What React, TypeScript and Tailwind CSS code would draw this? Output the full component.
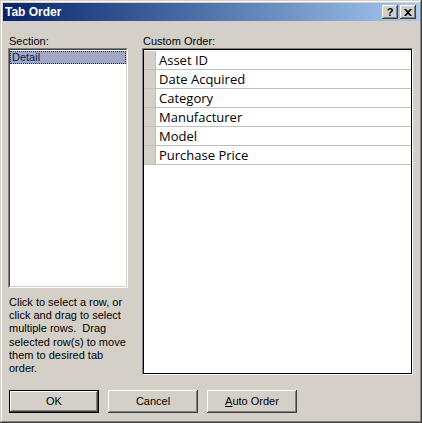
import React from 'react'

const FIELDS = ['Asset ID', 'Date Acquired', 'Category', 'Manufacturer', 'Model', 'Purchase Price']

const raised =
  'bg-[#d4d0c8] shadow-[inset_-1px_-1px_#404040,inset_1px_1px_#ffffff,inset_-2px_-2px_#808080,inset_2px_2px_#d4d0c8]'

function CaptionButton({ children }: { children: React.ReactNode }) {
  return (
    <div className={`w-[16px] h-[14px] flex items-center justify-center ${raised}`}>{children}</div>
  )
}

function DialogButton({ children, isDefault }: { children: React.ReactNode; isDefault?: boolean }) {
  return (
    <div className={`w-[90px] h-[23px] ${isDefault ? 'border border-black' : ''}`}>
      <div className={`w-full h-full flex items-center justify-center text-[11px] text-black ${raised}`}>
        {children}
      </div>
    </div>
  )
}

export default function App() {
  return (
    <div
      className="w-[422px] h-[423px] p-[3px] bg-[#d4d0c8] flex flex-col shadow-[inset_-1px_-1px_#404040,inset_1px_1px_#d4d0c8,inset_-2px_-2px_#808080,inset_2px_2px_#ffffff]"
      style={{ fontFamily: '"Liberation Sans", Arial, sans-serif' }}
    >
      {/* Title bar */}
      <div className="h-[18px] flex items-center bg-gradient-to-r from-[#0a246a] to-[#a6caf0] pl-[2px] pr-[3px]">
        <span className="flex-1 text-white font-bold text-[12px] leading-none">Tab Order</span>
        <div className="flex gap-[2px]">
          <CaptionButton>
            <span className="text-[11px] font-bold leading-none text-black">?</span>
          </CaptionButton>
          <CaptionButton>
            <svg width="8" height="7" viewBox="0 0 8 7">
              <path d="M0 0h2l2 2 2-2h2L5 3.5 8 7H6L4 5 2 7H0l3-3.5z" fill="#000" />
            </svg>
          </CaptionButton>
        </div>
      </div>

      {/* Body */}
      <div className="flex-1 flex flex-col px-[5px] pt-[14px]">
        <div className="flex gap-[14px]">
          {/* Section column */}
          <div className="w-[120px] flex flex-col">
            <div className="h-[13px] text-[11px] leading-[13px] text-black pl-[1px]">Section:</div>
            <div className="h-[240px] border border-t-[#808080] border-l-[#808080] border-b-white border-r-white">
              <div className="h-full bg-white border border-t-[#404040] border-l-[#404040] border-b-[#d4d0c8] border-r-[#d4d0c8] pt-[1px]">
                <div className="h-[13px] bg-[#a1a9c6] outline-1 outline-dotted outline-[#303030] -outline-offset-1 text-[11px] leading-[13px] text-[#0a1a4a] pl-[2px]">
                  Detail
                </div>
              </div>
            </div>
            <div className="mt-[8px] text-[11px] leading-[13.2px] text-black whitespace-pre pl-[1px]">
              {'Click to select a row, or\nclick and drag to select\nmultiple rows.  Drag\nselected row(s) to move\nthem to desired tab\norder.'}
            </div>
          </div>

          {/* Custom order column */}
          <div className="flex-1 flex flex-col pr-[1px]">
            <div className="h-[13px] text-[11px] leading-[13px] text-black pl-[1px]">Custom Order:</div>
            <div className="h-[327px] border border-t-[#808080] border-l-[#808080] border-b-white border-r-white">
              <div className="h-full bg-white border border-black pt-[1px]">
                {FIELDS.map((f) => (
                  <div key={f} className="h-[19px] flex border-b border-[#c0c0c0]">
                    <div className="w-[12px] bg-[#d4d0c8] border-r border-[#c0c0c0]" />
                    <div
                      className="flex-1 pl-[3px] text-[13px] leading-[18px] text-black"
                      style={{ fontFamily: '"Open Sans", sans-serif' }}
                    >
                      {f}
                    </div>
                  </div>
                ))}
              </div>
            </div>
          </div>
        </div>

        {/* Buttons */}
        <div className="mt-[15px] flex gap-[9px] pl-[1px]">
          <DialogButton isDefault>OK</DialogButton>
          <DialogButton>Cancel</DialogButton>
          <DialogButton>
            <span>
              <span className="underline">A</span>uto Order
            </span>
          </DialogButton>
        </div>
      </div>
    </div>
  )
}
